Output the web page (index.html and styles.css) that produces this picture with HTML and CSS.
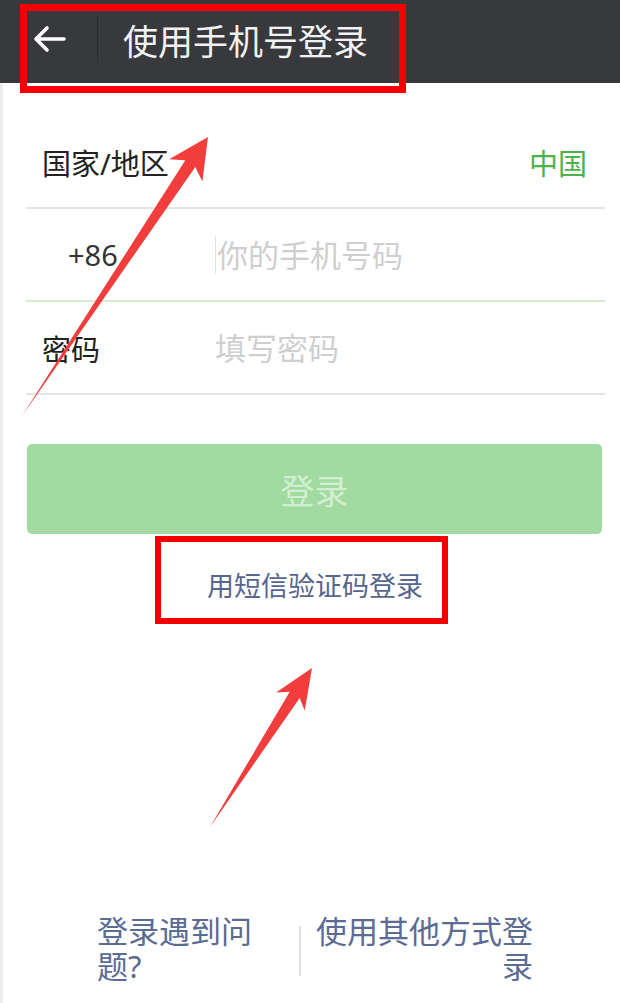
FILE: index.html
```html
<!DOCTYPE html>
<html lang="zh-CN">
<head>
  <meta charset="UTF-8">
  <title>使用手机号登录</title>
  <link rel="stylesheet" href="styles.css">
</head>
<body>
  <div class="page">
    <!-- Top bar -->
    <header class="topbar">
      <button class="back-btn" aria-label="返回">
        <svg width="34" height="28" viewBox="0 0 34 28">
          <path d="M32 14 H4 M15 3 L4 14 L15 25" fill="none" stroke="#fff" stroke-width="3.6" stroke-linecap="round" stroke-linejoin="round"/>
        </svg>
      </button>
      <span class="topbar-sep"></span>
      <h1 class="topbar-title">使用手机号登录</h1>
    </header>

    <main class="content">
      <form class="login-form">
        <div class="form-row">
          <span class="row-label">国家/地区</span>
          <span class="row-value">中国</span>
        </div>
        <div class="form-row focused">
          <span class="row-label code">+86</span>
          <input class="row-input phone" type="tel" placeholder="你的手机号码">
        </div>
        <div class="form-row">
          <span class="row-label">密码</span>
          <input class="row-input" type="password" placeholder="填写密码">
        </div>

        <button type="submit" class="login-btn" disabled>登录</button>
        <a class="sms-link" href="#">用短信验证码登录</a>
      </form>

      <div class="footer">
        <a class="footer-left" href="#">登录遇到问题?</a>
        <span class="footer-sep"></span>
        <a class="footer-right" href="#">使用其他方式登录</a>
      </div>
    </main>

    <!-- Annotation marks drawn over the screenshot -->
    <div class="mark mark-title"></div>
    <div class="mark mark-sms"></div>
    <svg class="arrows" width="620" height="1003" viewBox="0 0 620 1003">
      <polygon fill="#f23d3d" points="22,416 185.3,160.3 169.2,159.2 208,137 202.4,181.4 195.3,166.9"/>
      <polygon fill="#f23d3d" points="210,827 289.7,691.7 276.1,692.4 312,668 304.7,710.8 299.7,698.1"/>
    </svg>
  </div>
</body>
</html>
```

FILE: styles.css
```css
/* Page base */
body {
  margin: 0;
  background: #fff;
  font-family: "Noto Sans", "Noto Sans CJK SC", sans-serif;
}

.page {
  position: relative;
  width: 620px;
  min-height: 100vh;
  display: flex;
  flex-direction: column;
}

/* Top bar */
.topbar {
  height: 83px;
  box-sizing: border-box;
  padding-bottom: 5px;
  background: #38393d;
  display: flex;
  align-items: center;
}

.back-btn {
  width: 97px;
  padding: 0 0 0 32px;
  background: none;
  border: none;
  display: flex;
  align-items: center;
  cursor: pointer;
}

.topbar-sep {
  width: 1px;
  height: 46px;
  background: #2b2c2f;
}

.topbar-title {
  margin: 0 0 0 25px;
  color: #f2f2f2;
  font-size: 35px;
  font-weight: normal;
}

/* Content area */
.content {
  flex: 1;
  display: flex;
  flex-direction: column;
  box-shadow: inset 3px 0 0 #ededed;
}

.login-form {
  display: flex;
  flex-direction: column;
  padding-top: 33px;
}

.form-row {
  height: 93px;
  box-sizing: border-box;
  margin: 0 15px 0 26px;
  border-bottom: 2px solid #e3e3e3;
  display: flex;
  align-items: center;
}

.form-row.focused {
  border-bottom-color: #d6ebcf;
}

.row-label {
  flex: none;
  width: 189px;
  box-sizing: border-box;
  padding-left: 16px;
  font-size: 29px;
  color: #222;
}

.row-label.code {
  padding-left: 42px;
  color: #333;
}

.row-value {
  margin-left: auto;
  padding-right: 18px;
  font-size: 29px;
  color: #4cb24a;
}

.row-input {
  flex: 1;
  min-width: 0;
  height: 38px;
  padding: 0;
  border: none;
  outline: none;
  background: transparent;
  font-family: inherit;
  font-size: 31px;
  color: #333;
}

.row-input::placeholder {
  color: #cfcfcf;
}

.row-input.phone {
  border-left: 1px solid #e2e2e2;
  padding-left: 1px;
}

/* Login button */
.login-btn {
  margin: 49px 18px 0 27px;
  height: 90px;
  background: #a2dba1;
  border: none;
  border-radius: 5px;
  color: #d2efd1;
  font-family: inherit;
  font-size: 34px;
}

.sms-link {
  margin-top: 32px;
  padding-left: 10px;
  line-height: 40px;
  text-align: center;
  font-size: 27px;
  color: #56668f;
  text-decoration: none;
}

/* Bottom links */
.footer {
  margin-top: auto;
  padding: 0 0 19px 97px;
  display: flex;
  align-items: center;
}

.footer a {
  font-size: 31px;
  line-height: 35px;
  color: #5b6b94;
  text-decoration: none;
}

.footer-left {
  width: 180px;
}

.footer-sep {
  width: 2px;
  height: 50px;
  margin: 4px 0 0 22px;
  background: #e0e0e0;
}

.footer-right {
  width: 217px;
  margin-left: 15px;
  text-align: right;
}

/* Red annotation overlays */
.mark {
  position: absolute;
  border: 7px solid #f50000;
  box-sizing: border-box;
}

.mark-title {
  left: 20px;
  top: 4px;
  width: 386px;
  height: 89px;
}

.mark-sms {
  left: 155px;
  top: 536px;
  width: 293px;
  height: 88px;
  border-width: 6px;
}

.arrows {
  position: absolute;
  left: 0;
  top: 0;
  pointer-events: none;
}
```
